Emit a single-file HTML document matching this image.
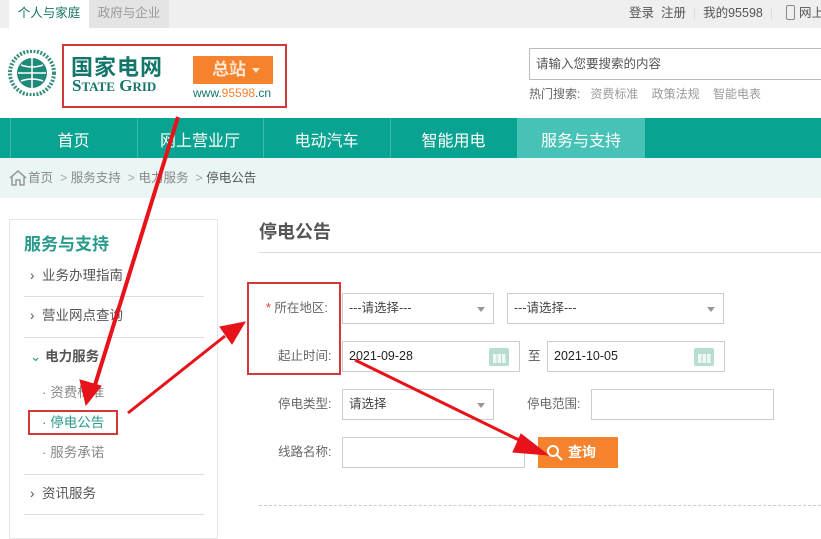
<!DOCTYPE html>
<html><head><meta charset="utf-8"><style>
*{margin:0;padding:0;box-sizing:border-box}
body{width:821px;height:525px;overflow:hidden;position:relative;background:#fff;font-family:"Liberation Sans","Noto Sans CJK SC",sans-serif;color:#555;font-size:13px}
.a{position:absolute;white-space:nowrap}
.sel{position:absolute;border:1px solid #ccc;background:#fff;height:31px;line-height:29px;padding-left:6px;color:#444;font-size:12.5px}
.tri{position:absolute;right:8px;top:13px;width:0;height:0;border-left:4px solid transparent;border-right:4px solid transparent;border-top:5px solid #999}
.cal{position:absolute;right:10px;top:6px;width:20px;height:18px;background:#b7dcd0;border-radius:2px}
.cal:after{content:"";position:absolute;left:3px;top:6px;width:14px;height:9px;background:repeating-linear-gradient(90deg,#b7dcd0 0 1px,#fff 1px 4.5px),#fff;opacity:.8}
.hl{position:absolute;left:24px;width:180px;height:1px;background:#ddd}
.si{position:absolute;left:30px;font-size:13.5px;color:#555;line-height:20px}
.lb{position:absolute;font-size:12.5px;color:#666;line-height:16px}
</style></head><body>
<div class="a" style="left:0;top:0;width:821px;height:28px;background:#efefef"></div>
<div class="a" style="left:9px;top:0;width:80px;height:28px;background:#fff;color:#14756a;font-size:12.5px;line-height:26px;text-align:center">个人与家庭</div>
<div class="a" style="left:89px;top:0;width:80px;height:28px;background:#e4e4e4;color:#999;font-size:12.5px;line-height:26px;text-align:center">政府与企业</div>
<div class="a" style="left:629px;top:5px;font-size:12.5px;color:#555;line-height:16px">登录&nbsp;&nbsp;注册 <span style="color:#ddd">&nbsp;|&nbsp;</span> 我的95598 <span style="color:#ddd">&nbsp;|&nbsp;</span></div>
<div class="a" style="left:786px;top:5px;width:9px;height:15px;border:1px solid #888;border-radius:2px"></div>
<div class="a" style="left:799px;top:5px;font-size:12.5px;color:#555;line-height:16px">网上</div>

<svg class="a" style="left:8px;top:50px" width="48" height="46" viewBox="0 0 48 46"><circle cx="24" cy="23" r="22" fill="none" stroke="#3a8e80" stroke-width="4" stroke-dasharray="2 1.5"/><circle cx="24" cy="23" r="15" fill="#1f8a7a"/><path d="M10 23h28M24 8v30M13 15q11 4 22 0M13 31q11-4 22 0" stroke="#fff" stroke-width="1.5" fill="none"/></svg>
<div class="a" style="left:62px;top:44px;width:225px;height:64px;border:2px solid #d23a3a"></div>
<div class="a" style="left:71px;top:52px;font-size:22px;font-weight:bold;color:#14756a;letter-spacing:1px;font-family:'Noto Sans CJK SC',sans-serif;line-height:28px">国家电网</div>
<div class="a" style="left:72px;top:77px;font-size:17px;font-weight:bold;color:#14756a;font-family:'Liberation Serif',serif;line-height:18px">S<span style="font-size:13px">TATE</span> G<span style="font-size:13px">RID</span></div>
<div class="a" style="left:193px;top:56px;width:80px;height:28px;background:#f5822c;color:#fde6d2;font-size:17px;font-weight:bold;line-height:28px;padding-left:19px">总站<span style="display:inline-block;margin-left:6px;width:0;height:0;border-left:4px solid transparent;border-right:4px solid transparent;border-top:5px solid #fde6d2;vertical-align:middle"></span></div>
<div class="a" style="left:193px;top:86px;font-size:12px;color:#14756a">www.<span style="color:#f5822c">95598</span>.cn</div>

<div class="a" style="left:529px;top:48px;width:300px;height:32px;border:1px solid #bbb;font-size:12.5px;line-height:30px;padding-left:6px;color:#555">请输入您要搜索的内容</div>
<div class="a" style="left:529px;top:85px;font-size:12px;color:#666">热门搜索:&nbsp;&nbsp;&nbsp;<span style="color:#999">资费标准&nbsp;&nbsp;&nbsp;&nbsp;政策法规&nbsp;&nbsp;&nbsp;&nbsp;智能电表</span></div>

<div class="a" style="left:0;top:118px;width:821px;height:40px;background:#08a391"></div>
<div class="a" style="left:517px;top:118px;width:128px;height:40px;background:#46c2b6"></div>
<div class="a" style="left:10px;top:118px;width:1px;height:40px;background:#3cb8a9"></div>
<div class="a" style="left:137px;top:118px;width:1px;height:40px;background:#3cb8a9"></div>
<div class="a" style="left:263px;top:118px;width:1px;height:40px;background:#3cb8a9"></div>
<div class="a" style="left:390px;top:118px;width:1px;height:40px;background:#3cb8a9"></div>
<div class="a" style="top:127px;left:10px;width:127px;text-align:center;color:#fff;font-size:16px">首页</div>
<div class="a" style="top:127px;left:137px;width:126px;text-align:center;color:#fff;font-size:16px">网上营业厅</div>
<div class="a" style="top:127px;left:263px;width:127px;text-align:center;color:#fff;font-size:16px">电动汽车</div>
<div class="a" style="top:127px;left:390px;width:127px;text-align:center;color:#fff;font-size:16px">智能用电</div>
<div class="a" style="top:127px;left:517px;width:128px;text-align:center;color:#fff;font-size:16px">服务与支持</div>

<div class="a" style="left:0;top:158px;width:821px;height:40px;background:#eaf6f6"></div>
<svg class="a" style="left:9px;top:170px" width="18" height="16" viewBox="0 0 18 16"><path d="M1 8L9 1l8 7M3 7v8h4v-5h4v5h4V7" fill="none" stroke="#999" stroke-width="1.5"/></svg>
<div class="a" style="left:28px;top:170px;font-size:12.5px;color:#888;line-height:16px">首页 <span style="color:#aaa">&nbsp;&gt;&nbsp;</span>服务支持 <span style="color:#aaa">&nbsp;&gt;&nbsp;</span>电力服务 <span style="color:#aaa">&nbsp;&gt;&nbsp;</span><span style="color:#555">停电公告</span></div>

<div class="a" style="left:9px;top:219px;width:209px;height:320px;border:1px solid #e6e6e6"></div>
<div class="a" style="left:24px;top:233px;font-size:17px;font-weight:bold;color:#2a9a8c;line-height:24px">服务与支持</div>
<div class="si" style="top:266px">›&nbsp;&nbsp;业务办理指南</div>
<div class="hl" style="top:296px"></div>
<div class="si" style="top:306px">›&nbsp;&nbsp;营业网点查询</div>
<div class="hl" style="top:337px"></div>
<div class="si" style="top:347px;font-weight:bold"><span style="color:#2a9a8c;font-weight:normal">⌄</span>&nbsp;电力服务</div>
<div class="si" style="top:383px;left:42px;color:#888">· 资费标准</div>
<div class="si" style="top:413px;left:42px;color:#2a9a8c">· 停电公告</div>
<div class="si" style="top:443px;left:42px;color:#888">· 服务承诺</div>
<div class="hl" style="top:474px"></div>
<div class="si" style="top:484px">›&nbsp;&nbsp;资讯服务</div>
<div class="hl" style="top:514px"></div>
<div class="a" style="left:28px;top:410px;width:90px;height:25px;border:2px solid #d23a3a"></div>

<div class="a" style="left:259px;top:220px;font-size:18px;font-weight:bold;color:#555;line-height:24px">停电公告</div>
<div class="a" style="left:259px;top:252px;width:562px;height:1px;background:#ddd"></div>
<div class="a" style="left:259px;top:505px;width:562px;border-top:1px dashed #ccc"></div>

<div class="a" style="left:247px;top:282px;width:94px;height:93px;border:2px solid #d23a3a"></div>
<div class="lb" style="left:266px;top:300px"><span style="color:#d33">*</span> 所在地区:</div>
<div class="lb" style="left:278px;top:348px">起止时间:</div>
<div class="lb" style="left:278px;top:396px">停电类型:</div>
<div class="lb" style="left:278px;top:444px">线路名称:</div>
<div class="lb" style="left:527px;top:396px">停电范围:</div>
<div class="lb" style="left:528px;top:348px;color:#555">至</div>

<div class="sel" style="left:342px;top:293px;width:152px">---请选择---<div class="tri"></div></div>
<div class="sel" style="left:507px;top:293px;width:217px">---请选择---<div class="tri"></div></div>
<div class="sel" style="left:342px;top:341px;width:178px;color:#222">2021-09-28<div class="cal"></div></div>
<div class="sel" style="left:547px;top:341px;width:178px;color:#222">2021-10-05<div class="cal"></div></div>
<div class="sel" style="left:342px;top:389px;width:152px">请选择<div class="tri"></div></div>
<div class="sel" style="left:591px;top:389px;width:183px"></div>
<div class="sel" style="left:342px;top:437px;width:183px"></div>
<div class="a" style="left:538px;top:437px;width:80px;height:31px;background:#f5822c;color:#fff;font-size:14px;font-weight:bold;line-height:31px;padding-left:30px">查询</div>
<svg class="a" style="left:546px;top:444px" width="18" height="18" viewBox="0 0 18 18"><circle cx="7" cy="7" r="5" fill="none" stroke="#fff" stroke-width="2"/><path d="M11 11l5 5" stroke="#fff" stroke-width="2"/></svg>

<svg class="a" style="left:0;top:0" width="821" height="525" viewBox="0 0 821 525">
<g fill="#e8121a" stroke="#e8121a">
<path d="M178 117L95 385" stroke-width="4"/>
<polygon points="86,405 80,380 101,386"/>
<path d="M128 413L225 336" stroke-width="3"/>
<polygon points="245,322 220,327 232,344"/>
<path d="M355 360L525 443" stroke-width="3"/>
<polygon points="548,455 521,434 513,452"/>
</g></svg>
</body></html>
